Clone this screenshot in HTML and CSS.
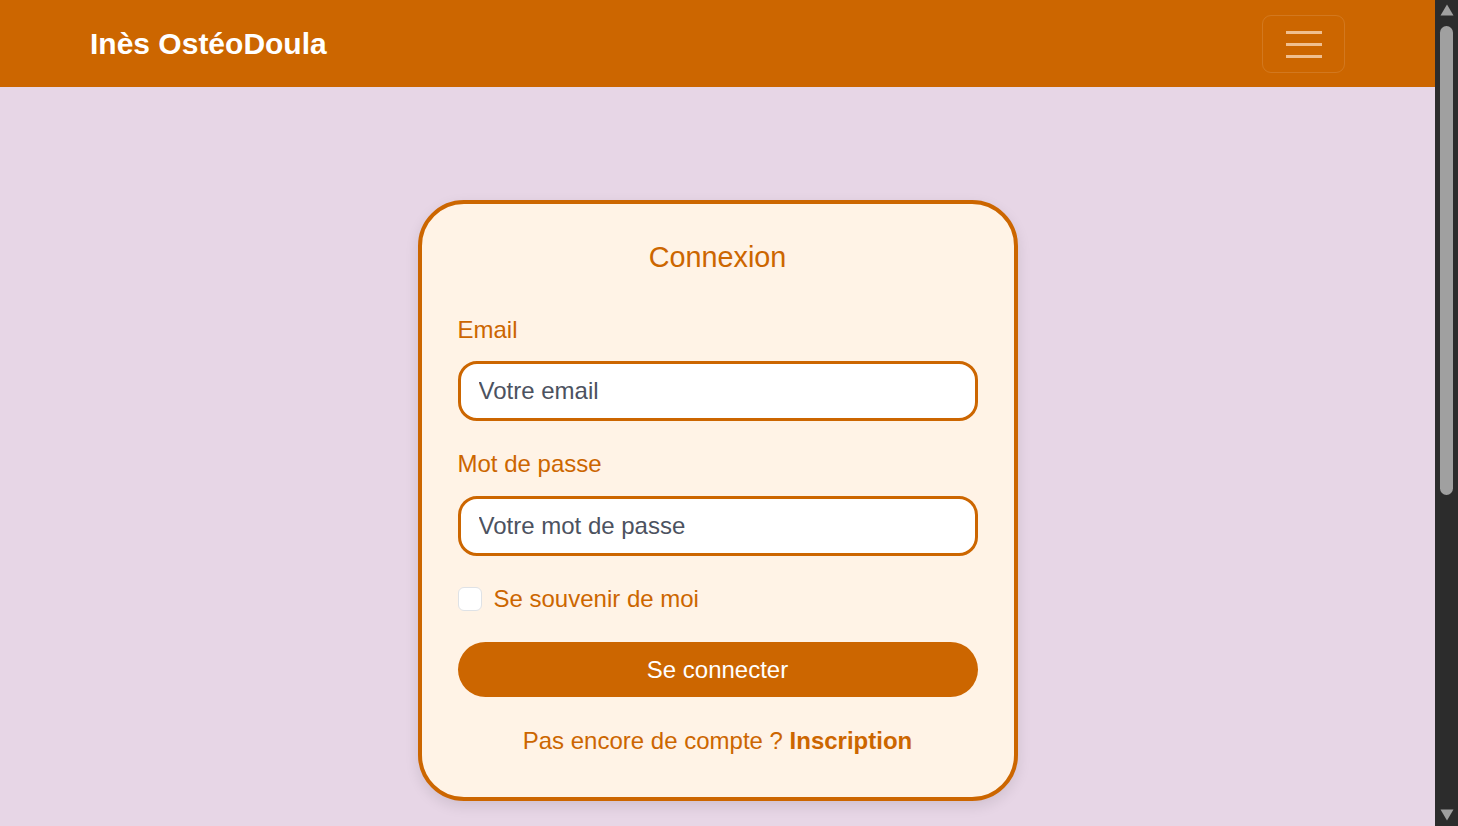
FILE: index.html
```html
<!DOCTYPE html>
<html lang="fr">
<head>
<meta charset="utf-8">
<title>Connexion - Inès OstéoDoula</title>
<link rel="stylesheet" href="styles.css">
</head>
<body>
<nav class="navbar">
  <div class="nav-inner">
    <a class="brand" href="#">Inès OstéoDoula</a>
    <button class="toggler" type="button" aria-label="Menu">
      <svg width="36" height="28" viewBox="0 0 36 28" aria-hidden="true">
        <path d="M0 2.5H36M0 14.5H36M0 26.5H36" stroke="#f0bf8f" stroke-width="3" stroke-linecap="round"/>
      </svg>
    </button>
  </div>
</nav>
<main class="page">
  <form class="card">
    <h1 class="title">Connexion</h1>
    <label class="label label-first" for="email">Email</label>
    <input class="field field-first" id="email" type="email" placeholder="Votre email">
    <label class="label" for="pwd">Mot de passe</label>
    <input class="field" id="pwd" type="password" placeholder="Votre mot de passe">
    <div class="check-row">
      <span class="checkbox"></span>
      <span class="check-label">Se souvenir de moi</span>
    </div>
    <button class="submit" type="button">Se connecter</button>
    <p class="signup">Pas encore de compte ? <a href="#">Inscription</a></p>
  </form>
</main>
<div class="scrollbar" aria-hidden="true">
  <svg class="arrow" width="14" height="12" viewBox="0 0 14 12"><path d="M7 0.5L13.5 11.5H0.5Z" fill="#a0a0a0"/></svg>
  <div class="thumb-track"><div class="thumb"></div></div>
  <svg class="arrow" width="14" height="12" viewBox="0 0 14 12"><path d="M0.5 0.5H13.5L7 11.5Z" fill="#a0a0a0"/></svg>
</div>
</body>
</html>
```
FILE: styles.css
```css
html {
  overflow: hidden;
}
body {
  margin: 0 23px 0 0;
  background: #e7d6e6;
  font-family: "Liberation Sans", Arial, sans-serif;
  color: #cc6600;
}
.navbar {
  background: #cc6600;
  height: 87px;
}
.nav-inner {
  height: 100%;
  margin: 0 90px;
  display: flex;
  align-items: center;
  justify-content: space-between;
}
.brand {
  color: #ffffff;
  font-weight: bold;
  font-size: 30px;
  text-decoration: none;
  line-height: 1;
}
.toggler {
  width: 83px;
  height: 58px;
  background: transparent;
  border: 1px solid rgba(255, 255, 255, 0.12);
  border-radius: 9px;
  display: flex;
  align-items: center;
  justify-content: center;
  padding: 0;
}
.toggler svg {
  display: block;
}
.page {
  padding: 113px 0 40px;
  display: flex;
  justify-content: center;
}
.card {
  width: 520px;
  padding: 36px 36px 38px;
  background: #fff3e6;
  border: 4px solid #cc6600;
  border-radius: 46px;
  box-shadow: 0 5px 14px rgba(0, 0, 0, 0.1);
  display: flex;
  flex-direction: column;
}
.title {
  margin: 0 0 38px;
  font-size: 28.8px;
  font-weight: normal;
  line-height: 34px;
  text-align: center;
  color: #cc6600;
}
.label {
  font-size: 24px;
  line-height: 36px;
  margin-bottom: 14px;
  color: #cc6600;
}
.label-first {
  margin-bottom: 13px;
}
.field {
  box-sizing: border-box;
  width: 100%;
  height: 60px;
  padding: 9px 18px;
  font-family: "Liberation Sans", Arial, sans-serif;
  font-size: 24px;
  line-height: 36px;
  color: #212529;
  background: #ffffff;
  border: 3px solid #cc6600;
  border-radius: 19px;
  margin-bottom: 25px;
  outline: none;
}
.field::placeholder {
  color: #4c5260;
  opacity: 1;
}
.check-row {
  display: flex;
  align-items: center;
  gap: 12px;
  height: 36px;
  margin-bottom: 25px;
}
.checkbox {
  box-sizing: border-box;
  width: 24px;
  height: 24px;
  background: #ffffff;
  border: 1px solid #dfe2e6;
  border-radius: 6px;
}
.check-label {
  font-size: 24px;
  line-height: 36px;
  color: #cc6600;
}
.submit {
  height: 55px;
  border: none;
  border-radius: 28px;
  background: #cc6600;
  color: #ffffff;
  font-family: "Liberation Sans", Arial, sans-serif;
  font-size: 24px;
  margin-bottom: 26px;
  padding: 0;
}
.signup {
  margin: 0;
  font-size: 24px;
  line-height: 36px;
  text-align: center;
  color: #cc6600;
}
.signup a {
  color: #cc6600;
  font-weight: bold;
  text-decoration: none;
}
.scrollbar {
  position: fixed;
  top: 0;
  right: 0;
  width: 23px;
  height: 100vh;
  background: #2c2c2c;
  display: flex;
  flex-direction: column;
  align-items: center;
  padding: 4px 0 5px;
  box-sizing: border-box;
}
.arrow {
  display: block;
  flex: none;
}
.thumb-track {
  flex: 1;
  width: 13px;
  padding-top: 10px;
}
.thumb {
  width: 13px;
  height: 469px;
  border-radius: 6.5px;
  background: #a0a0a0;
}
```
